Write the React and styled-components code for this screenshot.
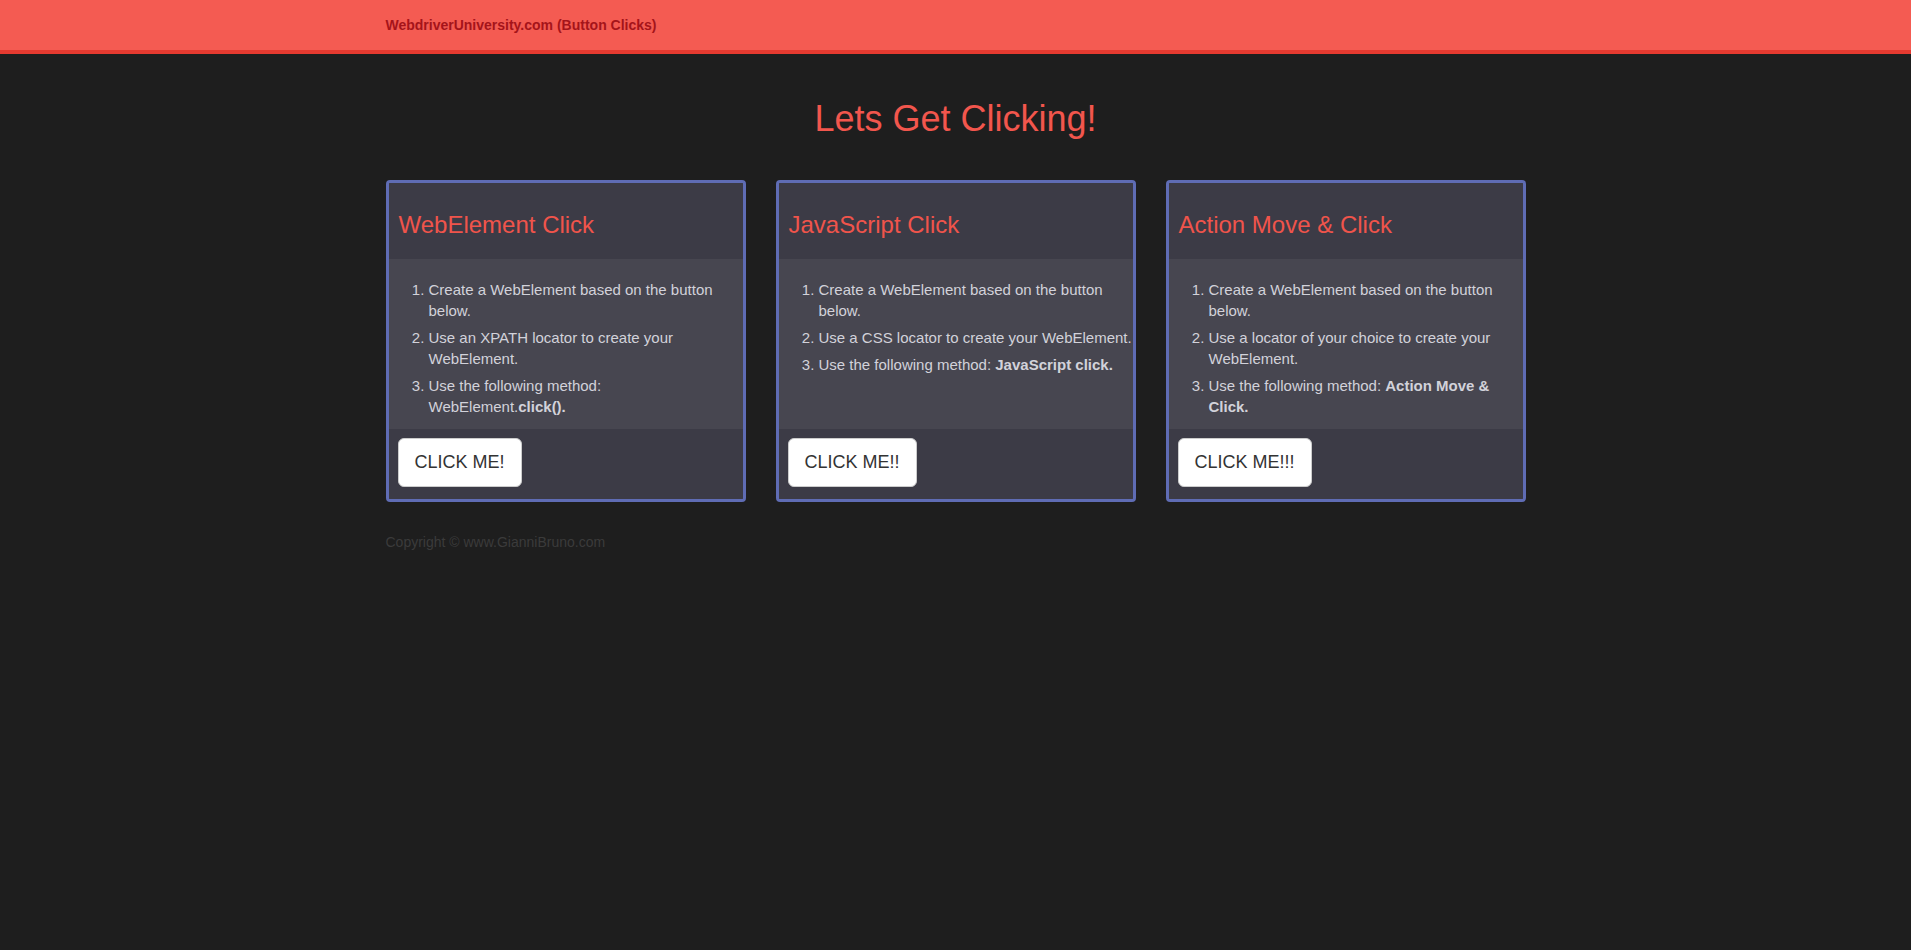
import React from "react";
import styled, { createGlobalStyle } from "styled-components";

const GlobalStyle = createGlobalStyle`
  html, body {
    margin: 0;
    padding: 0;
    background: #1e1e1e;
    font-family: "Liberation Sans", Arial, Helvetica, sans-serif;
    font-size: 14px;
    line-height: 1.42857;
    color: #333;
  }
  * {
    box-sizing: border-box;
  }
`;

const CARDS = [
  {
    title: "WebElement Click",
    steps: [
      "Create a WebElement based on the button below.",
      "Use an XPATH locator to create your WebElement.",
      <>
        Use the following method: WebElement.<b>click().</b>
      </>,
    ],
    button: "CLICK ME!",
  },
  {
    title: "JavaScript Click",
    steps: [
      "Create a WebElement based on the button below.",
      "Use a CSS locator to create your WebElement.",
      <>
        Use the following method: <b>JavaScript click.</b>
      </>,
    ],
    button: "CLICK ME!!",
  },
  {
    title: "Action Move & Click",
    steps: [
      "Create a WebElement based on the button below.",
      "Use a locator of your choice to create your WebElement.",
      <>
        Use the following method: <b>Action Move &amp; Click.</b>
      </>,
    ],
    button: "CLICK ME!!!",
  },
];

const Navbar = styled.nav`
  height: 54px;
  background: #f45b52;
  border-bottom: 4px solid #e63a30;
`;

const Container = styled.div`
  width: 1170px;
  margin: 0 auto;
  padding: 0 15px;
`;

const Brand = styled.a`
  display: block;
  line-height: 50px;
  font-size: 14px;
  font-weight: bold;
  color: #a5141a;
  text-decoration: none;
`;

const Title = styled.h1`
  margin: 45px 0 41px;
  font-size: 36px;
  font-weight: 400;
  line-height: 1.1;
  text-align: center;
  color: #f2564d;
`;

const CardRow = styled.div`
  display: grid;
  grid-template-columns: repeat(3, 1fr);
  gap: 30px;
`;

const Card = styled.div`
  border: 3px solid #5f6cb4;
  border-radius: 4px;
  background: #3c3b46;
  overflow: hidden;
`;

const CardHeading = styled.div`
  padding: 10px;
  background: #3c3b46;
`;

const CardTitle = styled.h3`
  margin: 19px 0 11px;
  font-size: 24px;
  font-weight: 400;
  line-height: 1.1;
  color: #f0544b;
`;

const CardBody = styled.div`
  height: 170px;
  padding-top: 20px;
  background: #474650;
`;

const Steps = styled.ol`
  margin: 0;
  padding: 0 0 0 40px;
  font-size: 15px;
  line-height: 21px;
  color: #d2d2da;

  li {
    margin-bottom: 6px;
  }

  b {
    font-weight: bold;
  }
`;

const CardFooter = styled.div`
  padding: 9px 9px 12px;
  background: #3c3b46;
`;

const ClickButton = styled.button`
  padding: 11px 16px;
  font-family: inherit;
  font-size: 18px;
  line-height: 25px;
  color: #333;
  background: #fff;
  border: 1px solid #ccc;
  border-radius: 6px;
  cursor: pointer;
`;

const Copyright = styled.p`
  margin: 30px 0 0;
  line-height: 20px;
  color: #3b3b3b;
`;

const ClickCard = ({ title, steps, button }) => (
  <Card>
    <CardHeading>
      <CardTitle>{title}</CardTitle>
    </CardHeading>
    <CardBody>
      <Steps>
        {steps.map((step, i) => (
          <li key={i}>{step}</li>
        ))}
      </Steps>
    </CardBody>
    <CardFooter>
      <ClickButton type="button">{button}</ClickButton>
    </CardFooter>
  </Card>
);

export default function App() {
  return (
    <>
      <GlobalStyle />
      <Navbar>
        <Container>
          <Brand href="#">WebdriverUniversity.com (Button Clicks)</Brand>
        </Container>
      </Navbar>
      <Container>
        <Title>Lets Get Clicking!</Title>
        <CardRow>
          {CARDS.map((card) => (
            <ClickCard key={card.title} {...card} />
          ))}
        </CardRow>
        <Copyright>Copyright © www.GianniBruno.com</Copyright>
      </Container>
    </>
  );
}
